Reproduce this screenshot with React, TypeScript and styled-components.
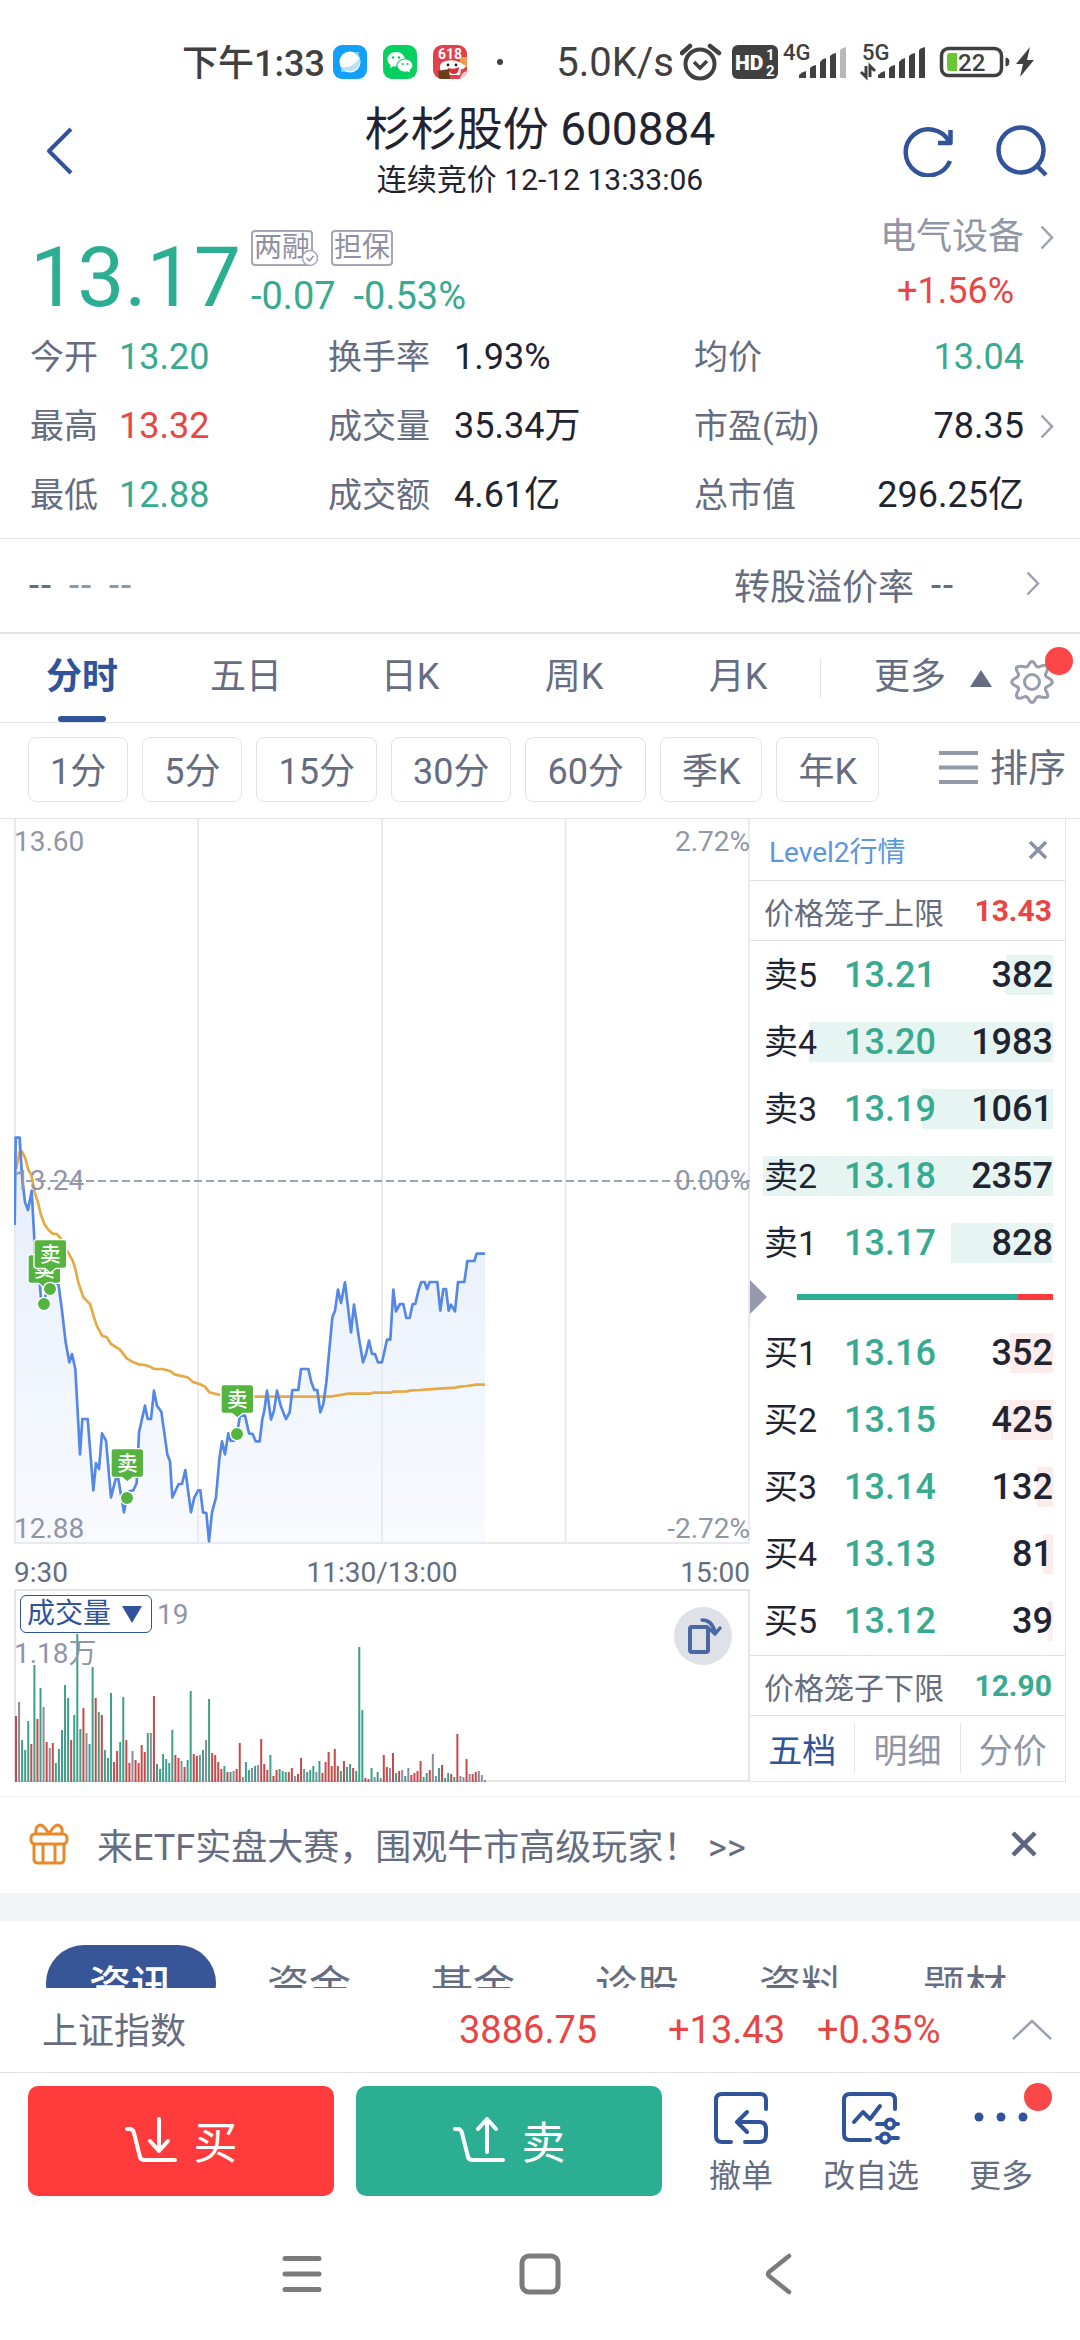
import React from 'react';
import styled, { createGlobalStyle } from 'styled-components';

const c = {
  ink: '#1f2430',
  label: '#666d80',
  muted: '#9096a6',
  green: '#37aa90',
  greenFill: '#2cae93',
  red: '#e84545',
  redFill: '#ff3b3b',
  blue: '#30539a',
  line: '#e2e3e6',
  status: '#404040',
};

const GlobalStyle = createGlobalStyle`
  *, *::before, *::after { box-sizing: border-box; }
  body {
    margin: 0;
    background: #fff;
    color: ${c.ink};
    font-family: Roboto, "Noto Sans CJK SC", sans-serif;
    font-size: 36px;
  }
  button, select { font: inherit; color: inherit; background: none; border: 0; padding: 0; margin: 0; }
  svg { display: block; flex: none; }
  dl, dd, dt, h1, p { margin: 0; font-weight: 400; }
  a { text-decoration: none; color: inherit; }
`;

const Screen = styled.div`
  display: flex;
  flex-direction: column;
  min-height: 100vh;
`;

/* ---------- status bar ---------- */
const StatusBar = styled.div`
  display: flex;
  justify-content: space-between;
  padding: 40px 44px 16px 182px;
  color: ${c.status};
  font-weight: 500;
`;
const StatusGroup = styled.div`
  display: flex;
  align-items: center;
  height: 44px;
  gap: ${p => p.$gap || 0}px;
`;
const Clock = styled.span`
  width: 135px;
  padding-bottom: 4px;
  white-space: nowrap;
`;
const Speed = styled.span`
  font-size: 40px;
  font-weight: 400;
  margin-right: 6px;
`;

/* ---------- header ---------- */
const Header = styled.header`
  display: grid;
  grid-template-columns: 1fr auto 1fr;
  align-items: center;
  padding: 0 32px;
`;
const BackButton = styled.button`
  justify-self: start;
  padding-left: 12px;
`;
const TitleBlock = styled.div`
  text-align: center;
`;
const Title = styled.h1`
  font-size: 46px;
  line-height: 58px;
`;
const Subtitle = styled.p`
  font-size: 30px;
  line-height: 44px;
`;
const HeaderActions = styled.div`
  display: flex;
  justify-content: flex-end;
  gap: 42px;
`;

/* ---------- quote ---------- */
const Quote = styled.section`
  padding: 8px 26px 8px 30px;
  border-bottom: 1px solid ${c.line};
`;
const QuoteTop = styled.div`
  display: flex;
  align-items: flex-end;
`;
const Price = styled.div`
  font-size: 84px;
  line-height: 80px;
  color: ${c.greenFill};
  font-weight: 400;
  width: 221px;
`;
const QuoteMiddle = styled.div`
  flex: 1;
`;
const Badges = styled.div`
  display: flex;
  gap: 18px;
  margin-bottom: 8px;
`;
const Badge = styled.span`
  position: relative;
  border: 2px solid #a5a6b8;
  border-radius: 4px;
  width: 62px;
  height: 36px;
  font-size: 28px;
  line-height: 32px;
  text-align: center;
  color: #8f90a6;
  white-space: nowrap;
  display: flex;
  justify-content: center;
  svg { position: absolute; right: -8px; bottom: -3px; }
`;
const Change = styled.div`
  display: flex;
  gap: 18px;
  font-size: 38px;
  line-height: 44px;
  color: ${c.green};
`;
const Sector = styled.a`
  display: grid;
  grid-template-columns: auto 14px;
  column-gap: 16px;
  line-height: 54px;
  text-align: right;
  align-items: center;
  color: ${c.muted};
`;
const SectorChange = styled.span`
  color: ${c.red};
  padding-right: 10px;
`;
const StatsRow = styled.div`
  display: flex;
  align-items: center;
  justify-content: space-between;
  padding-top: 5px;
`;
const Stats = styled.dl`
  flex: 1;
  display: grid;
  grid-template-columns: 298px 366px 1fr;
  margin-right: 16px;
`;
const Stat = styled.div`
  display: flex;
  line-height: 69px;
  white-space: nowrap;
  dt { width: ${p => p.$label}px; color: ${c.label}; font-size: 34px; }
  dd { color: ${p => p.$color || c.ink}; ${p => p.$end && 'margin-left: auto;'} }
`;
const BondRow = styled.a`
  display: flex;
  align-items: center;
  height: 93px;
  padding: 0 40px 4px 28px;
  color: ${c.label};
  gap: 16px;
`;
const Blank = styled.span`
  font-family: "Liberation Sans", sans-serif;
  color: ${p => (p.$faint ? c.muted : c.label)};
`;
const BondName = styled.span`
  margin-left: auto;
`;
const BondEnd = styled.span`
  margin-left: 56px;
`;

/* ---------- period tabs ---------- */
const Tabs = styled.nav`
  display: flex;
  height: 91px;
  border-top: 2px solid ${c.line};
  border-bottom: 1px solid ${c.line};
`;
const Tab = styled.button`
  position: relative;
  flex: 1;
  padding-bottom: 10px;
  color: ${p => (p.$active ? c.blue : c.label)};
  font-weight: ${p => (p.$active ? 700 : 400)};
  &::after {
    content: '';
    display: ${p => (p.$active ? 'block' : 'none')};
    position: absolute;
    bottom: 0;
    left: calc(50% - 24px);
    width: 48px;
    height: 6px;
    border-radius: 3px;
    background: ${c.blue};
  }
`;
const TabsEnd = styled.div`
  display: flex;
  align-items: center;
  width: 260px;
  padding-left: 54px;
  position: relative;
  color: ${c.label};
  &::before {
    content: '';
    position: absolute;
    left: 0;
    top: 24px;
    height: 40px;
    border-left: 1px solid ${c.line};
  }
`;
const MoreButton = styled.button`
  display: flex;
  align-items: center;
  gap: 24px;
  padding-bottom: 10px;
  svg { margin-top: 10px; }
`;
const GearButton = styled.button`
  position: relative;
  margin: 8px 0 0 17px;
`;
const Dot = styled.span`
  position: absolute;
  width: 28px;
  height: 28px;
  border-radius: 50%;
  background: #fb4747;
  right: ${p => p.$right}px;
  top: ${p => p.$top}px;
`;
const Chips = styled.div`
  display: flex;
  gap: 14px;
  align-items: center;
  padding: 14px 14px 16px 28px;
  border-bottom: 1px solid ${c.line};
  color: ${c.label};
`;
const Chip = styled.button`
  height: 65px;
  padding: 0 21px 4px;
  border: 1px solid ${c.line};
  border-radius: 8px;
  white-space: nowrap;
`;
const SortButton = styled.button`
  margin-left: auto;
  display: flex;
  align-items: center;
  gap: 12px;
  font-size: 38px;
  line-height: 52px;
  padding-bottom: 4px;
`;

/* ---------- chart area ---------- */
const Market = styled.section`
  display: flex;
  padding: 0 14px;
`;
const ChartColumn = styled.div`
  flex: 1;
  min-width: 0;
`;
const ChartBox = styled.div`
  position: relative;
  svg.plot { width: 100%; height: auto; }
`;
const AxisLabel = styled.span`
  position: absolute;
  font-size: 28px;
  line-height: 30px;
  color: ${c.muted};
  ${p => (p.$right ? 'right: 0;' : 'left: 0;')}
  top: ${p => p.$top}px;
`;
const TimeAxis = styled.div`
  display: grid;
  grid-template-columns: 1fr auto 1fr;
  height: 45px;
  align-items: center;
  padding-top: 11px;
  font-size: 28px;
  color: ${c.label};
  span:last-child { text-align: right; }
`;
const VolumeHead = styled.div`
  position: absolute;
  top: 6px;
  left: 6px;
  display: flex;
  align-items: center;
  gap: 5px;
  font-size: 28px;
  color: ${c.muted};
`;
const Picker = styled.label`
  position: relative;
  color: ${c.blue};
  background: #fff;
  select {
    display: block;
    appearance: none;
    width: 132px;
    height: 38px;
    padding: 0 0 0 6px;
    border: 1px solid ${c.blue};
    border-radius: 6px;
    line-height: 34px;
  }
  svg { position: absolute; right: 10px; top: 11px; pointer-events: none; }
`;
const RotateButton = styled.button`
  position: absolute;
  top: 18px;
  right: 18px;
  width: 58px;
  height: 58px;
  border-radius: 50%;
  background: #dfe1e8;
  display: flex;
  align-items: center;
  justify-content: center;
`;

/* ---------- order book ---------- */
const Book = styled.aside`
  position: relative;
  width: 316px;
  border-right: 1px solid ${c.line};
  border-bottom: 1px solid ${c.line};
`;
const LevelRow = styled.div`
  height: 62px;
  border-bottom: 1px solid ${c.line};
  display: flex;
  align-items: center;
  justify-content: space-between;
  padding: 0 17px 0 19px;
  font-size: 28px;
  color: #5b97e0;
`;
const Cage = styled.div`
  height: ${p => (p.$lower ? 61 : 60)}px;
  border: 0 solid ${c.line};
  border-width: ${p => (p.$lower ? '1px 0 1px' : '0 0 1px')};
  display: flex;
  align-items: center;
  justify-content: space-between;
  padding: 0 13px 0 14px;
  font-size: 30px;
  color: ${c.label};
  b { color: ${p => (p.$lower ? c.green : c.red)}; }
`;
const Orders = styled.table`
  width: 290px;
  margin: ${p => (p.$side === 'buy' ? '2px 12px 1px 13px' : '0 12px 0 13px')};
  border-collapse: collapse;
  table-layout: fixed;
  tr {
    height: 67px;
    --tint: ${p => (p.$side === 'buy' ? '#feebeb' : '#e7f5f2')};
    background: linear-gradient(var(--tint), var(--tint)) right center / var(--depth) 40px no-repeat;
  }
  th, td { padding: 0; font-weight: 500; line-height: 48px; white-space: nowrap; }
  th { width: 68px; padding-left: 1px; font-weight: 400; font-size: 34px; text-align: left; }
  td { text-align: right; }
  td:nth-child(2) { width: 118px; text-align: center; color: ${c.green}; }
`;
const RatioRow = styled.div`
  display: flex;
  align-items: center;
  height: 41px;
  padding-right: 12px;
`;
const RatioBar = styled.div`
  flex: 1;
  margin-left: 30px;
  height: 6px;
  display: flex;
  background: ${c.redFill};
`;
const RatioSell = styled.div`
  background: ${c.greenFill};
`;
const BookTabs = styled.div`
  display: flex;
  height: 64px;
  align-items: center;
  font-size: 34px;
`;
const BookTab = styled.button`
  flex: 1;
  height: 50px;
  color: ${p => (p.$active ? c.blue : c.muted)};
  & + & { border-left: 1px solid ${c.line}; }
`;

/* ---------- below chart ---------- */
const Promo = styled.div`
  display: flex;
  align-items: center;
  margin-top: 14px;
  height: 97px;
  border-top: 1px solid #f1f2f3;
  padding: 0 43px 2px 28px;
  color: ${c.label};
  white-space: nowrap;
  a { flex: 1; margin-left: 27px; }
`;
const Band = styled.div`
  height: 28px;
  background: #f3f4f6;
`;
const InfoTabs = styled.nav`
  display: flex;
  align-items: flex-start;
  height: 67px;
  overflow: hidden;
  padding: 24px 0 0 46px;
  font-size: 42px;
`;
const InfoTab = styled.button`
  flex: none;
  height: 76px;
  padding: 0 ${p => (p.$active ? 43 : 40)}px 2px;
  margin-right: ${p => (p.$active ? 11 : 0)}px;
  border-radius: 38px;
  color: ${p => (p.$active ? '#fff' : c.label)};
  background: ${p => (p.$active ? '#385697' : 'transparent')};
  font-weight: ${p => (p.$active ? 500 : 400)};
`;
const IndexRow = styled.div`
  display: flex;
  align-items: center;
  height: 85px;
  border-bottom: 1px solid ${c.line};
  padding: 0 28px 0 42px;
  font-size: 38px;
  color: ${c.red};
`;
const IndexName = styled.span`
  flex: 1;
  font-size: 36px;
  color: ${c.label};
  padding-bottom: 4px;
`;
const IndexValue = styled.span`
  width: ${p => p.$w}px;
`;
const Actions = styled.footer`
  display: flex;
  padding: 13px 14px 0 28px;
`;
const Trade = styled.button`
  flex: 1;
  height: 110px;
  border-radius: 10px;
  margin-right: ${p => (p.$sell ? 14 : 22)}px;
  background: ${p => (p.$sell ? c.greenFill : c.redFill)};
  color: #fff;
  font-size: 44px;
  display: flex;
  align-items: center;
  justify-content: center;
  gap: 15px;
  padding-bottom: 2px;
`;
const Tool = styled.button`
  position: relative;
  width: 130px;
  height: 110px;
  padding-top: 5px;
  display: flex;
  flex-direction: column;
  align-items: center;
  gap: 11px;
  font-size: 32px;
  line-height: 40px;
  color: ${c.label};
`;
const SystemNav = styled.nav`
  display: flex;
  justify-content: center;
  gap: 160px;
  padding-top: 56px;
`;
const NavKey = styled.button`
  width: 78px;
  height: 44px;
  display: flex;
  align-items: center;
  justify-content: center;
`;

/* ---------- icons ---------- */
const Chevron = ({ w = 14, h = 25, stroke = '#9da2b0', sw = 2.5 }) => (
  <svg width={w} height={h} viewBox="0 0 14 25" fill="none" stroke={stroke} strokeWidth={sw}>
    <path d="M1.5 1.5 12 12.5 1.5 23.5" />
  </svg>
);

const Signal = ({ faded }: { faded?: boolean }) => (
  <svg width="48" height="32" viewBox="0 0 48 32" fill={c.status}>
    <path d="M0 31V28Q3 25 7 24V31Z" />
    <path d="M11 31V21Q13 18.5 17 18V31Z" />
    <path d="M21 31V15Q23 12 27 11V31Z" />
    <path d="M31 31V9Q33 6.500 37 6V31Z" />
    <path d="M41 31V3Q43 1 47 0V31Z" fill={faded ? '#b8b8b8' : c.status} />
  </svg>
);

const StatusIcons = () => (
  <>
    <svg width="34" height="34" viewBox="0 0 34 34">
      <rect width="34" height="34" rx="9" fill="#12a0fb" />
      <circle cx="17" cy="17" r="10.500" fill="#fff" />
      <path d="M27 15A10.500 10.500 0 0 1 8 22Q20 24 27 12Z" fill="#b9e1fb" />
      <path d="M8 22 8 27 13 27ZM21 7H26V12Z" fill="#7fcbfb" />
    </svg>
    <svg width="34" height="34" viewBox="0 0 34 34">
      <rect width="34" height="34" rx="9" fill="#06d160" />
      <path d="M13 7C8 7 4.500 10.300 4.500 14.300c0 2.400 1.200 4.300 3.100 5.600L7 23l3.200-1.800c1 .3 2 .4 3 .4.400-5 4-8 8.600-8C21 9.700 17.400 7 13 7Z" fill="#fff" />
      <path d="M22 14.500c-4.200 0-7.400 2.700-7.400 6s3.200 6 7.400 6c.9 0 1.700-.1 2.400-.3L27 27.500l-.6-2.500c1.900-1.100 3-2.700 3-4.500 0-3.300-3.200-6-7.400-6Z" fill="#fff" />
      <g fill="#06d160"><circle cx="10" cy="12.500" r="1.300" /><circle cx="16" cy="12.500" r="1.300" /><circle cx="19.600" cy="19" r="1.100" /><circle cx="24.500" cy="19" r="1.100" /></g>
    </svg>
    <svg width="34" height="34" viewBox="0 0 34 34">
      <defs><clipPath id="mall"><rect width="34" height="34" rx="9" /></clipPath></defs>
      <g clipPath="url(#mall)">
        <rect width="34" height="34" fill="#e2404a" />
        <rect x="27" y="12" width="7" height="10" fill="#f39a4c" />
        <text x="17" y="14" textAnchor="middle" fontSize="14" fontWeight="700" fill="#fff">618</text>
        <path d="M7 24Q6 17 13 16Q20 14 26 17L33 21Q31 25 28 24L27 30H10Z" fill="#fff" />
        <circle cx="15" cy="20" r="1.400" fill="#222" /><circle cx="23" cy="20" r="1.400" fill="#222" />
        <path d="M15 23Q21 25 26 22Q26 29 21 29Q16 29 15 23Z" fill="#d5323c" />
        <path d="M5 26 16 24 17 34H6Z" fill="#6a3d1b" />
        <path d="M27 34Q28 27 34 26V34Z" fill="#f7c9cc" />
      </g>
    </svg>
  </>
);

const BuySellIcon = ({ up }: { up?: boolean }) => (
  <svg width="54" height="46" viewBox="0 0 54 46" fill="none" stroke="#fff" strokeWidth="4" strokeLinecap="round" strokeLinejoin="round">
    <path d="M2 12H5Q8 12 9 16L15 40Q16 43 19 43H50" />
    {up ? <path d="M34 35V2M25 12 34 2 43 12" /> : <path d="M34 2V34M25 24 34 34 43 24" />}
  </svg>
);

/* ---------- data ---------- */
const priceLine =
  '44,378 47,116 59,116 66,230 75,310 84,333 95,275 103,420 103,460 120,560 124,612 134,600 140,575 150,575 165,540 176,560 186,635 197,730 208,790 216,765 226,810 240,1066 247,960 263,960 280,1174 288,1092 297,1110 306,1003 318,1025 333,1195 347,1140 355,1140 372,1240 381,1195 388,1177 400,1174 410,1152 417,1000 435,920 443,960 453,960 462,875 471,920 484,938 502,1066 510,1087 517,1195 536,1155 546,1155 556,1113 573,1240 583,1195 595,1174 601,1174 609,1240 619,1242 627,1327 636,1240 648,1195 658,1080 666,1027 675,1066 685,1003 692,1025 702,1025 712,1000 720,950 735,950 747,1003 758,1005 767,1027 779,1027 787,960 793,935 801,875 813,962 822,935 831,875 842,920 858,960 869,940 877,873 895,873 903,810 925,810 934,850 943,873 952,873 961,940 970,915 979,850 997,655 1005,635 1014,572 1023,612 1035,550 1053,700 1062,617 1078,725 1089,790 1098,765 1107,725 1116,765 1125,765 1134,790 1146,790 1161,722 1171,722 1180,572 1188,637 1200,615 1210,615 1219,657 1229,657 1238,615 1246,615 1256,572 1264,549 1274,549 1281,570 1289,549 1312,549 1321,635 1330,570 1338,570 1346,635 1353,617 1365,637 1374,549 1393,549 1402,486 1423,486 1430,464 1455,464';
const averageLine =
  '48,210 60,155 66,158 76,178 84,210 94,228 104,280 114,310 122,345 133,375 145,392 158,404 170,405 182,418 195,445 205,462 218,485 226,510 235,550 250,595 270,615 282,655 290,680 306,710 320,715 333,735 360,752 380,778 400,790 420,797 435,798 450,803 463,810 487,810 512,817 525,827 550,832 565,836 577,848 600,856 615,863 628,880 660,888 700,893 990,893 1010,890 1045,884 1110,884 1120,881 1170,881 1180,878 1220,877 1235,874 1260,873 1285,871 1330,868 1365,866 1380,863 1400,861 1430,857 1455,857';
const trades = [
  { x: 133, y: 469 },
  { x: 151, y: 424 },
  { x: 382, y: 1051 },
  { x: 712, y: 859 },
];
const volumes =
  'r66 n80 g42 g32 g61 r38 g117 r63 g94 n75 r40 n34 r39 g19 g33 g52 g97 g84 r42 g67 g148 g53 r74 n49 g38 g115 r84 g70 r67 g32 g24 g89 r20 r31 g40 g85 r42 r19 n31 r22 r19 r37 r30 g49 n49 r86 g18 g13 g28 g23 g19 g52 r27 r24 n21 r15 g22 g91 r28 r26 n27 g32 n42 g83 r29 r27 r20 r13 g16 r10 g10 n11 r13 r39 n5 g20 g12 n14 g16 n17 r43 r18 r12 g27 r6 r12 g13 g11 g10 r10 r14 n6 r8 r24 n13 g10 g12 g16 n10 g21 r9 r20 r30 r16 r33 r16 g11 r21 g15 g18 r14 g11 g135 g72 r4 r3 g14 n5 g10 n4 r27 r15 n14 r29 g9 r11 n12 g6 n14 r7 r9 r11 r21 g5 g9 r12 n28 n6 g14 r17 g4 g9 r8 g5 r48 n6 n5 r23 n8 r8 r10 n11 n7 n2'.split(' ');
const volumeColors: Record<string, string> = { r: '#c74a4a', g: '#3fa08a', n: '#8a8d9f' };

const stats = [
  ['今开', '13.20', c.green], ['换手率', '1.93%', ''], ['均价', '13.04', c.green],
  ['最高', '13.32', c.red], ['成交量', '35.34万', ''], ['市盈(动)', '78.35', ''],
  ['最低', '12.88', c.green], ['成交额', '4.61亿', ''], ['总市值', '296.25亿', ''],
];
const labelWidths = [89, 126, 140];
const sells: [string, string, number][] = [['卖5', '13.21', 382], ['卖4', '13.20', 1983], ['卖3', '13.19', 1061], ['卖2', '13.18', 2357], ['卖1', '13.17', 828]];
const buys: [string, string, number][] = [['买1', '13.16', 352], ['买2', '13.15', 425], ['买3', '13.14', 132], ['买4', '13.13', 81], ['买5', '13.12', 39]];

const OrderTable = ({ rows, side }: { rows: [string, string, number][]; side: string }) => (
  <Orders $side={side}>
    <tbody>
      {rows.map(([name, price, qty]) => (
        <tr key={name} style={{ '--depth': `${(qty / 2357) * 100}%` } as React.CSSProperties}>
          <th scope="row">{name}</th>
          <td>{price}</td>
          <td>{qty}</td>
        </tr>
      ))}
    </tbody>
  </Orders>
);

const PriceChart = () => (
  <ChartBox>
    <svg className="plot" viewBox="0 0 736 725" fill="none">
      <defs>
        <linearGradient id="area" x1="0" y1="0" x2="0" y2="1">
          <stop offset="0" stopColor="#e6eefb" />
          <stop offset="1" stopColor="#f8fafe" />
        </linearGradient>
      </defs>
      <g transform="translate(-14 280) scale(.33333)">
        <polygon points={`44,1332 ${priceLine} 1455,1332`} fill="url(#area)" />
      </g>
      <path d="M1 0V724M184 0V724M368 0V724M551.500 0V724M735 0V724M0 724H736" stroke="#e9eaed" strokeWidth="2" />
      <path d="M12 362H736" stroke="#9aa3b2" strokeWidth="2" strokeDasharray="8 4" />
      <g transform="translate(-14 280) scale(.33333)" strokeLinejoin="round">
        <polyline points={averageLine} stroke="#e5a946" strokeWidth="8" />
        <polyline points={priceLine} stroke="#5487e6" strokeWidth="8" />
        {trades.map(t => (
          <g key={t.x} fill="#55b43f" stroke="#fff" strokeWidth="4">
            <circle cx={t.x - 1} cy={t.y + 146} r="20" />
            <path d={`M${t.x - 41} ${t.y - 2}h82q8 0 8 8v70q0 8 -8 8h-24l-17 14l-17 -14h-24q-8 0 -8 -8v-70q0 -8 8 -8z`} />
            <text x={t.x} y={t.y + 64} textAnchor="middle" fontSize="62" fontWeight="500" fill="#fff" stroke="none">卖</text>
          </g>
        ))}
      </g>
    </svg>
    <AxisLabel $top={8}>13.60</AxisLabel>
    <AxisLabel $top={8} $right>2.72%</AxisLabel>
    <AxisLabel $top={347}>13.24</AxisLabel>
    <AxisLabel $top={347} $right>0.00%</AxisLabel>
    <AxisLabel $top={695}>12.88</AxisLabel>
    <AxisLabel $top={695} $right>-2.72%</AxisLabel>
  </ChartBox>
);

const VolumeChart = () => (
  <ChartBox>
    <svg className="plot" viewBox="0 0 736 193" fill="none">
      <path d="M1 193V1H735V193M0 192H736" stroke="#e4e5e9" strokeWidth="2" />
      {volumes.map((v, i) => (
        <rect key={i} x={1 + i * 3.065} y={193 - Number(v.slice(1))} width="2" height={v.slice(1)} fill={volumeColors[v[0]]} />
      ))}
    </svg>
    <AxisLabel $top={50}>1.18万</AxisLabel>
    <VolumeHead>
      <Picker>
        <select aria-label="指标" defaultValue="vol"><option value="vol">成交量</option></select>
        <svg width="20" height="17" viewBox="0 0 20 17"><path d="M0 0H20L10 17Z" fill={c.blue} /></svg>
      </Picker>
      <span>19</span>
    </VolumeHead>
    <RotateButton aria-label="横屏">
      <svg width="38" height="38" viewBox="0 0 38 38" fill="none" stroke="#4a68a3" strokeWidth="4" strokeLinejoin="round" strokeLinecap="round">
        <rect x="6" y="10" width="18" height="25" rx="2" />
        <path d="M18 3Q28 3 31 15M26 12 31 17 36 11" strokeWidth="3.500" />
      </svg>
    </RotateButton>
  </ChartBox>
);

export default function App() {
  return (
    <Screen>
      <GlobalStyle />
      <StatusBar>
        <StatusGroup $gap={16}>
          <Clock>下午1:33</Clock>
          <StatusIcons />
          <svg width="40" height="10" viewBox="0 0 40 10"><circle cx="17" cy="5" r="3" fill={c.status} /></svg>
        </StatusGroup>
        <StatusGroup $gap={0}>
          <Speed>5.0K/s</Speed>
          <svg width="356" height="40" viewBox="680 42 356 40" fill="none">
            <circle cx="700" cy="64" r="14.500" stroke={c.status} strokeWidth="4" />
            <path d="M694 62 700 68 707 61" stroke={c.status} strokeWidth="3.500" />
            <path d="M682 53 690 46M710 46 719 53" stroke={c.status} strokeWidth="4.500" strokeLinecap="round" />
            <rect x="732" y="45" width="46" height="34" rx="6" fill={c.status} />
            <text x="735" y="70" fontSize="21" fontWeight="900" fill="#fff">HD</text>
            <text x="766" y="60" fontSize="15" fontWeight="700" fill="#fff">1</text>
            <text x="766" y="76" fontSize="15" fontWeight="700" fill="#fff">2</text>
            <text x="783" y="60" fontSize="22" fill={c.status}>4G</text>
            <text x="862" y="60" fontSize="22" fill={c.status}>5G</text>
            <g transform="translate(799 47)"><Signal faded /></g>
            <g transform="translate(878 47)"><Signal /></g>
            <path d="M866 66V77L861 72M870 77V66L875 71" stroke={c.status} strokeWidth="3" />
            <rect x="941.500" y="48.500" width="60" height="27" rx="7" stroke={c.status} strokeWidth="3.500" />
            <path d="M950 53H957V71H950Q947 71 947 68V56Q947 53 950 53Z" fill="#69c832" />
            <text x="958" y="71" fontSize="24" fill={c.status}>22</text>
            <path d="M1006 58Q1009 58 1009 62Q1009 66 1006 66Z" fill={c.status} stroke={c.status} />
            <path d="M1030 47 1016 64H1023L1020 77 1034 60H1027Z" fill={c.status} />
          </svg>
        </StatusGroup>
      </StatusBar>

      <Header>
        <BackButton aria-label="返回">
          <svg width="30" height="48" viewBox="0 0 30 48" fill="none" stroke={c.blue} strokeWidth="4" strokeLinejoin="round">
            <path d="M27 2 5 24 27 46" />
          </svg>
        </BackButton>
        <TitleBlock>
          <Title>杉杉股份 600884</Title>
          <Subtitle>连续竞价 12-12 13:33:06</Subtitle>
        </TitleBlock>
        <HeaderActions>
          <button aria-label="刷新">
            <svg width="52" height="52" viewBox="0 0 52 52" fill="none" stroke={c.blue} strokeWidth="4.500">
              <path d="M48 36A23 23 0 1 1 47 16.500" />
              <path d="M48.500 5V18H36" strokeLinejoin="round" />
            </svg>
          </button>
          <button aria-label="搜索">
            <svg width="52" height="52" viewBox="0 0 52 52" fill="none" stroke={c.blue} strokeWidth="4.500">
              <circle cx="25" cy="25" r="22.500" />
              <path d="M41 41 50 50" />
            </svg>
          </button>
        </HeaderActions>
      </Header>

      <Quote>
        <QuoteTop>
          <Price>13.17</Price>
          <QuoteMiddle>
            <Badges>
              <Badge>
                两融
                <svg width="18" height="18" viewBox="0 0 18 18"><circle cx="9" cy="9" r="7.500" fill="#fff" stroke="#a5a6b8" strokeWidth="1.500" /><path d="M5.500 9 8.500 12 12.500 7" fill="none" stroke="#8f90a6" strokeWidth="1.500" /></svg>
              </Badge>
              <Badge>担保</Badge>
            </Badges>
            <Change><span>-0.07</span><span>-0.53%</span></Change>
          </QuoteMiddle>
          <Sector href="#sector">
            <span>电气设备</span>
            <Chevron />
            <SectorChange>+1.56%</SectorChange>
          </Sector>
        </QuoteTop>
        <StatsRow>
          <Stats>
            {stats.map(([name, value, color], i) => (
              <Stat key={name} $label={labelWidths[i % 3]} $color={color} $end={i % 3 === 2}>
                <dt>{name}</dt>
                <dd>{value}</dd>
              </Stat>
            ))}
          </Stats>
          <Chevron />
        </StatsRow>
      </Quote>

      <BondRow href="#bond">
        <Blank>--</Blank>
        <Blank $faint>--</Blank>
        <Blank $faint>--</Blank>
        <BondName>转股溢价率</BondName>
        <Blank>--</Blank>
        <BondEnd><Chevron /></BondEnd>
      </BondRow>

      <Tabs>
        {['分时', '五日', '日K', '周K', '月K'].map((t, i) => (
          <Tab key={t} $active={i === 0}>{t}</Tab>
        ))}
        <TabsEnd>
          <MoreButton>
            更多
            <svg width="22" height="17" viewBox="0 0 22 17"><path d="M11 0 22 17H0Z" fill={c.label} /></svg>
          </MoreButton>
          <GearButton aria-label="设置">
            <svg width="46" height="46" viewBox="0 0 46 46" fill="none" stroke="#989dac" strokeWidth="3" strokeLinejoin="round">
              <path d="M19.500 6Q23 -1 26.500 6Q27.500 8.500 30 8Q38 4 38.500 9.500Q38.500 12 36.500 15Q36 18 39.500 19Q47 23 39.500 27Q36 28 36.500 31Q41 38 36.500 38.500Q33 38.500 30 37.500Q27.500 37.500 26.500 40Q23 47 19.500 40Q18.500 37.500 16 37.500Q8 41.500 7.500 36.500Q7.500 34 9.500 31Q10 28 6.500 27Q-1 23 6.500 19Q10 18 9.500 15Q5 8 9.500 7.500Q13 7 16 8Q18.500 8.500 19.500 6Z" />
              <circle cx="23" cy="23" r="7.500" />
            </svg>
            <Dot $right={-18} $top={-12} />
          </GearButton>
        </TabsEnd>
      </Tabs>
      <Chips>
        {['1分', '5分', '15分', '30分', '60分', '季K', '年K'].map(t => <Chip key={t}>{t}</Chip>)}
        <SortButton>
          <svg width="39" height="33" viewBox="0 0 39 33" stroke="#9399a9" strokeWidth="4"><path d="M0 2H39M0 16.500H39M0 31H39" /></svg>
          排序
        </SortButton>
      </Chips>

      <Market>
        <ChartColumn>
          <PriceChart />
          <TimeAxis><span>9:30</span><span>11:30/13:00</span><span>15:00</span></TimeAxis>
          <VolumeChart />
        </ChartColumn>
        <Book>
          <LevelRow>
            <a href="#level2">Level2行情</a>
            <button aria-label="关闭">
              <svg width="20" height="20" viewBox="0 0 20 20" stroke="#8b91a2" strokeWidth="3.500"><path d="M2 2 18 18M18 2 2 18" /></svg>
            </button>
          </LevelRow>
          <Cage><span>价格笼子上限</span><b>13.43</b></Cage>
          <OrderTable rows={sells} side="sell" />
          <RatioRow>
            <svg width="17" height="34" viewBox="0 0 17 34"><path d="M0 0 17 17 0 34Z" fill="#959bac" /></svg>
            <RatioBar><RatioSell style={{ width: '86.4%' }} /></RatioBar>
          </RatioRow>
          <OrderTable rows={buys} side="buy" />
          <Cage $lower><span>价格笼子下限</span><b>12.90</b></Cage>
          <BookTabs>
            <BookTab $active>五档</BookTab>
            <BookTab>明细</BookTab>
            <BookTab>分价</BookTab>
          </BookTabs>
        </Book>
      </Market>

      <Promo>
        <svg width="42" height="42" viewBox="0 0 42 42" fill="none" stroke="#e8892c" strokeWidth="3" strokeLinejoin="round">
          <rect x="3" y="11" width="36" height="10" rx="4" />
          <path d="M6 21V36Q6 40 10 40H32Q36 40 36 36V21M15 21V40M27 21V40" />
          <path d="M21 11Q16 2 12 2Q7 3 8 11M21 11Q26 2 30 2Q35 3 34 11" />
        </svg>
        <a href="#etf">来ETF实盘大赛，围观牛市高级玩家！ &gt;&gt;</a>
        <button aria-label="关闭广告">
          <svg width="26" height="26" viewBox="0 0 26 26" stroke="#5d6580" strokeWidth="4.500"><path d="M2 2 24 24M24 2 2 24" /></svg>
        </button>
      </Promo>
      <Band />
      <InfoTabs>
        {['资讯', '资金', '基金', '诊股', '资料', '题材'].map((t, i) => (
          <InfoTab key={t} $active={i === 0}>{t}</InfoTab>
        ))}
      </InfoTabs>
      <IndexRow>
        <IndexName>上证指数</IndexName>
        <IndexValue $w={209}>3886.75</IndexValue>
        <IndexValue $w={149}>+13.43</IndexValue>
        <IndexValue $w={195}>+0.35%</IndexValue>
        <button aria-label="展开">
          <svg width="40" height="22" viewBox="0 0 40 22" fill="none" stroke="#9da2b0" strokeWidth="2.500"><path d="M1 20 20 2 39 20" /></svg>
        </button>
      </IndexRow>
      <Actions>
        <Trade><BuySellIcon />买</Trade>
        <Trade $sell><BuySellIcon up />卖</Trade>
        <Tool>
          <svg width="54" height="54" viewBox="0 0 54 54" fill="none" stroke={c.blue} strokeWidth="4" strokeLinecap="round" strokeLinejoin="round">
            <path d="M52 18V9Q52 3 46 3H8Q2 3 2 9V45Q2 51 8 51H17" />
            <path d="M31 51H45Q52 51 52 44V38Q52 31 45 31H23M33 21 23 31 33 41" />
          </svg>
          撤单
        </Tool>
        <Tool>
          <svg width="60" height="54" viewBox="0 0 60 54" fill="none" stroke={c.blue} strokeWidth="4" strokeLinecap="round" strokeLinejoin="round">
            <path d="M54 18V9Q54 3 48 3H9Q3 3 3 9V43Q3 49 9 49H29" />
            <path d="M13 31 22 21 29 28 39 15" />
            <path d="M36 33H43M55 33H57M36 47H39M51 47H57" />
            <circle cx="49" cy="33" r="4.500" /><circle cx="44" cy="47" r="4.500" />
          </svg>
          改自选
        </Tool>
        <Tool>
          <svg width="54" height="54" viewBox="0 0 54 54" fill={c.blue}>
            <circle cx="5" cy="26" r="4.500" /><circle cx="27" cy="26" r="4.500" /><circle cx="49" cy="26" r="4.500" />
          </svg>
          更多
          <Dot $right={14} $top={-3} />
        </Tool>
      </Actions>
      <SystemNav>
        <NavKey aria-label="最近任务">
          <svg width="40" height="38" viewBox="0 0 40 38" stroke="#7b7b7b" strokeWidth="5" strokeLinecap="round"><path d="M3 3.500H37M3 19H37M3 34.500H37" /></svg>
        </NavKey>
        <NavKey aria-label="主屏幕">
          <svg width="42" height="42" viewBox="0 0 42 42" fill="none" stroke="#7b7b7b" strokeWidth="5"><rect x="3" y="3" width="36" height="36" rx="7" /></svg>
        </NavKey>
        <NavKey aria-label="后退">
          <svg width="28" height="42" viewBox="0 0 28 42" fill="none" stroke="#7b7b7b" strokeWidth="4.500" strokeLinecap="round" strokeLinejoin="round"><path d="M25 3 5 19Q3 21 5 23L25 39" /></svg>
        </NavKey>
      </SystemNav>
    </Screen>
  );
}
